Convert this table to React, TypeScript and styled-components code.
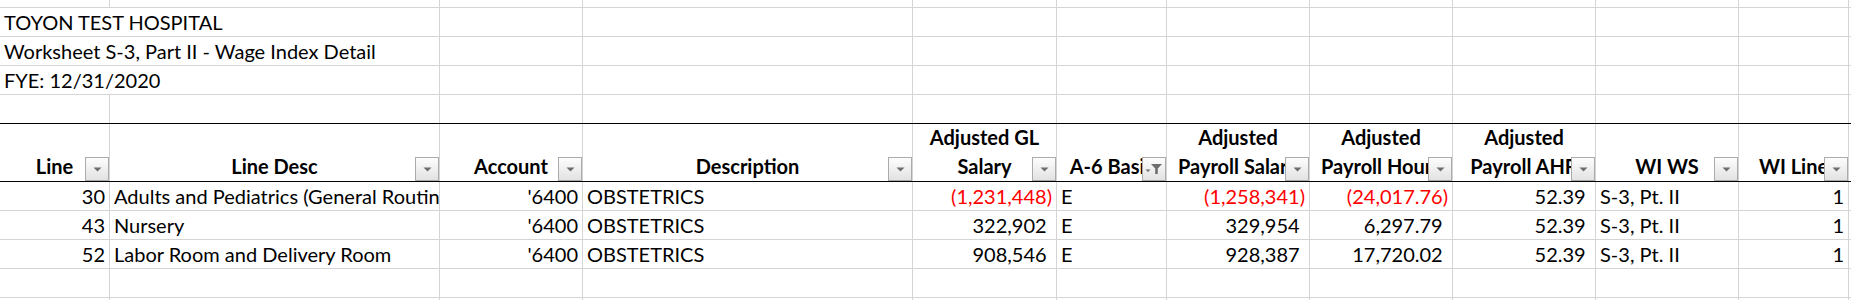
import React from "react";
import styled, { createGlobalStyle } from "styled-components";

const GRID = "#d4d4d4";
const COLS = "110px 330px 143px 330px 144px 110px 143px 143px 143px 143px 110px 2px";

const GlobalStyle = createGlobalStyle`
  html, body {
    margin: 0;
    padding: 0;
    background: #fff;
  }
  body {
    font-family: Lato, "Liberation Sans", sans-serif;
    font-size: 20px;
    color: #000;
  }
`;

const Sheet = styled.div`
  width: 1851px;
  height: 300px;
  overflow: hidden;
  display: flex;
  flex-direction: column;
`;

const Row = styled.div<{ $h: number; $rule?: boolean }>`
  display: grid;
  grid-template-columns: ${COLS};
  height: ${(p) => p.$h}px;
  flex: none;
  box-sizing: border-box;
  border-bottom: 1px solid ${(p) => (p.$rule ? "#000" : GRID)};
`;

const Cell = styled.div<{ $align?: "left" | "right" | "center"; $red?: boolean; $span?: number }>`
  grid-column: span ${(p) => p.$span || 1};
  border-right: 1px solid ${GRID};
  padding: 0 4px;
  line-height: 28px;
  white-space: nowrap;
  overflow: hidden;
  text-align: ${(p) => p.$align || "left"};
  color: ${(p) => (p.$red ? "#ff0000" : "#000")};
`;

const HeadCell = styled.div`
  position: relative;
  border-right: 1px solid ${GRID};
  display: flex;
  flex-direction: column;
  justify-content: flex-end;
  font-weight: 700;
  line-height: 29px;
  text-align: center;
  white-space: nowrap;
  overflow: hidden;
`;

const HeadLine = styled.div`
  display: flex;
  justify-content: center;
`;

const FilterButton = styled.span`
  position: absolute;
  right: 0;
  bottom: 0;
  width: 24px;
  height: 24px;
  box-sizing: border-box;
  border: 1px solid #ababab;
  background: linear-gradient(#fdfdfd, #e2e2e2);
  display: flex;
  align-items: center;
  justify-content: center;
`;

const Pad = styled.span`
  visibility: hidden;
`;

type Col = { label: string[]; filtered?: boolean };

const columns: Col[] = [
  { label: ["Line"] },
  { label: ["Line Desc"] },
  { label: ["Account"] },
  { label: ["Description"] },
  { label: ["Adjusted GL", "Salary"] },
  { label: ["A-6 Basis"], filtered: true },
  { label: ["Adjusted", "Payroll Salary"] },
  { label: ["Adjusted", "Payroll Hours"] },
  { label: ["Adjusted", "Payroll AHR"] },
  { label: ["WI WS"] },
  { label: ["WI Line"] },
];

const rows = [
  {
    line: 30,
    lineDesc: "Adults and Pediatrics (General Routine Services)",
    account: "'6400",
    description: "OBSTETRICS",
    glSalary: -1231448,
    basis: "E",
    payrollSalary: -1258341,
    payrollHours: -24017.76,
    ahr: 52.39,
    ws: "S-3, Pt. II",
    wiLine: 1,
  },
  {
    line: 43,
    lineDesc: "Nursery",
    account: "'6400",
    description: "OBSTETRICS",
    glSalary: 322902,
    basis: "E",
    payrollSalary: 329954,
    payrollHours: 6297.79,
    ahr: 52.39,
    ws: "S-3, Pt. II",
    wiLine: 1,
  },
  {
    line: 52,
    lineDesc: "Labor Room and Delivery Room",
    account: "'6400",
    description: "OBSTETRICS",
    glSalary: 908546,
    basis: "E",
    payrollSalary: 928387,
    payrollHours: 17720.02,
    ahr: 52.39,
    ws: "S-3, Pt. II",
    wiLine: 1,
  },
];

const titles = ["TOYON TEST HOSPITAL", "Worksheet S-3, Part II - Wage Index Detail", "FYE: 12/31/2020"];

const DropArrow = () => (
  <svg width="9" height="5" viewBox="0 0 9 5">
    <path d="M0.5 0.5h8L4.5 4.5z" fill="#6d6d6d" />
  </svg>
);

const FunnelIcon = () => (
  <svg width="18" height="12" viewBox="0 0 18 12">
    <path d="M0.5 6.5h5L3 9z" fill="#6d6d6d" />
    <path d="M6 1h11l-4.2 4.4V11h-2.6V5.4z" fill="#6d6d6d" />
  </svg>
);

// accounting style: negatives in red parens, positives keep room for the ")"
const Amount = ({ value, digits = 0 }: { value: number; digits?: number }) => {
  const text = Math.abs(value).toLocaleString("en-US", {
    minimumFractionDigits: digits,
    maximumFractionDigits: digits,
  });
  if (value < 0) {
    return (
      <Cell $align="right" $red>
        ({text})
      </Cell>
    );
  }
  return (
    <Cell $align="right">
      {text}
      <Pad>)</Pad>
    </Cell>
  );
};

const EmptyRow = ({ h, rule }: { h: number; rule?: boolean }) => (
  <Row $h={h} $rule={rule}>
    {columns.map((_, i) => (
      <Cell key={i} />
    ))}
    <Cell />
  </Row>
);

export default function App() {
  return (
    <>
      <GlobalStyle />
      <Sheet>
        <EmptyRow h={8} />
        {titles.map((t) => (
          <Row $h={29} key={t}>
            <Cell $span={2} style={{ overflow: "visible" }}>
              {t}
            </Cell>
            {columns.slice(2).map((_, i) => (
              <Cell key={i} />
            ))}
            <Cell />
          </Row>
        ))}
        <EmptyRow h={29} rule />
        <Row $h={58} $rule>
          {columns.map((c, i) => (
            <HeadCell key={i}>
              {c.label.map((l) => (
                <HeadLine key={l}>{l}</HeadLine>
              ))}
              <FilterButton>{c.filtered ? <FunnelIcon /> : <DropArrow />}</FilterButton>
            </HeadCell>
          ))}
          <Cell />
        </Row>
        {rows.map((r) => (
          <Row $h={29} key={r.line}>
            <Cell $align="right">{r.line}</Cell>
            <Cell>{r.lineDesc}</Cell>
            <Cell $align="right">{r.account}</Cell>
            <Cell>{r.description}</Cell>
            <Amount value={r.glSalary} />
            <Cell>{r.basis}</Cell>
            <Amount value={r.payrollSalary} />
            <Amount value={r.payrollHours} digits={2} />
            <Amount value={r.ahr} digits={2} />
            <Cell>{r.ws}</Cell>
            <Cell $align="right">{r.wiLine}</Cell>
            <Cell />
          </Row>
        ))}
        <EmptyRow h={29} />
        <EmptyRow h={29} />
      </Sheet>
    </>
  );
}
